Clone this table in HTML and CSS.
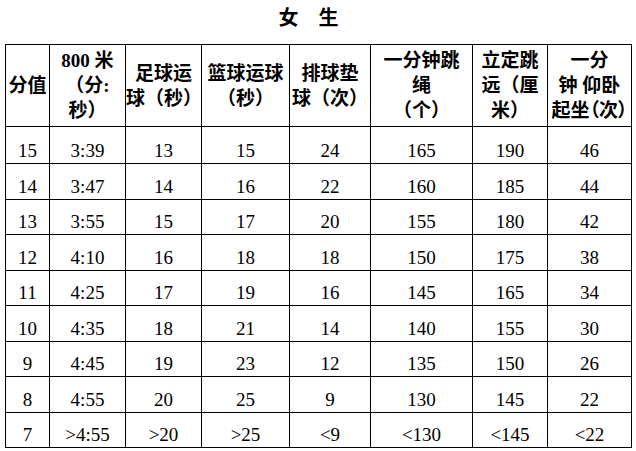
FILE: index.html
```html
<!DOCTYPE html>
<html lang="zh-CN">
<head>
<meta charset="utf-8">
<title>女生</title>
<link rel="stylesheet" href="styles.css">
</head>
<body>
<h1 class="title">女　生</h1>
<table class="score-table">
  <colgroup>
    <col class="col-score">
    <col class="col-run">
    <col class="col-foot">
    <col class="col-basket">
    <col class="col-volley">
    <col class="col-rope">
    <col class="col-jump">
    <col class="col-situp">
  </colgroup>
  <thead>
    <tr>
      <th>分值</th>
      <th>800 米<br>（分:<br>秒）</th>
      <th>足球运<br>球（秒）</th>
      <th>篮球运球<br>（秒）</th>
      <th>排球垫<br>球（次）</th>
      <th>一分钟跳<br>绳<br>（个）</th>
      <th>立定跳<br>远（厘<br>米）</th>
      <th>一分<br>钟 仰卧<br><span class="tight">起坐（次）</span></th>
    </tr>
  </thead>
  <tbody>
    <tr><td>15</td><td>3:39</td><td>13</td><td>15</td><td>24</td><td>165</td><td>190</td><td>46</td></tr>
    <tr><td>14</td><td>3:47</td><td>14</td><td>16</td><td>22</td><td>160</td><td>185</td><td>44</td></tr>
    <tr><td>13</td><td>3:55</td><td>15</td><td>17</td><td>20</td><td>155</td><td>180</td><td>42</td></tr>
    <tr><td>12</td><td>4:10</td><td>16</td><td>18</td><td>18</td><td>150</td><td>175</td><td>38</td></tr>
    <tr><td>11</td><td>4:25</td><td>17</td><td>19</td><td>16</td><td>145</td><td>165</td><td>34</td></tr>
    <tr><td>10</td><td>4:35</td><td>18</td><td>21</td><td>14</td><td>140</td><td>155</td><td>30</td></tr>
    <tr><td>9</td><td>4:45</td><td>19</td><td>23</td><td>12</td><td>135</td><td>150</td><td>26</td></tr>
    <tr><td>8</td><td>4:55</td><td>20</td><td>25</td><td>9</td><td>130</td><td>145</td><td>22</td></tr>
    <tr><td>7</td><td>&gt;4:55</td><td>&gt;20</td><td>&gt;25</td><td>&lt;9</td><td>&lt;130</td><td>&lt;145</td><td>&lt;22</td></tr>
  </tbody>
</table>
</body>
</html>
```

FILE: styles.css
```css
* {
  box-sizing: border-box;
}

html,
body {
  margin: 0;
  padding: 0;
  background: #fff;
}

body {
  font-family: "Liberation Serif", "Noto Sans CJK SC", serif;
  color: #000;
}

.title {
  margin: 0;
  height: 44px;
  padding-right: 19px;
  text-align: center;
  font-family: "Noto Sans CJK SC", sans-serif;
  font-size: 20px;
  font-weight: 700;
  line-height: 33px;
}

.score-table {
  margin-left: 5px;
  width: 626px;
  border-collapse: collapse;
  table-layout: fixed;
}

.col-score { width: 44px; }
.col-run { width: 76px; }
.col-foot { width: 76px; }
.col-basket { width: 88px; }
.col-volley { width: 81px; }
.col-rope { width: 102px; }
.col-jump { width: 75px; }
.col-situp { width: 84px; }

.score-table th,
.score-table td {
  border: 1px solid #000;
  padding: 0;
  text-align: center;
}

.score-table th {
  height: 82px;
  font-size: 19px;
  font-weight: 700;
  line-height: 25px;
  vertical-align: middle;
}

.tight {
  font-feature-settings: "palt";
  white-space: nowrap;
}

.score-table td {
  height: 35.5px;
  font-size: 19px;
  line-height: 22px;
  vertical-align: bottom;
  padding-bottom: 1px;
}

.score-table tbody tr:first-child td {
  height: 37px;
}
```
